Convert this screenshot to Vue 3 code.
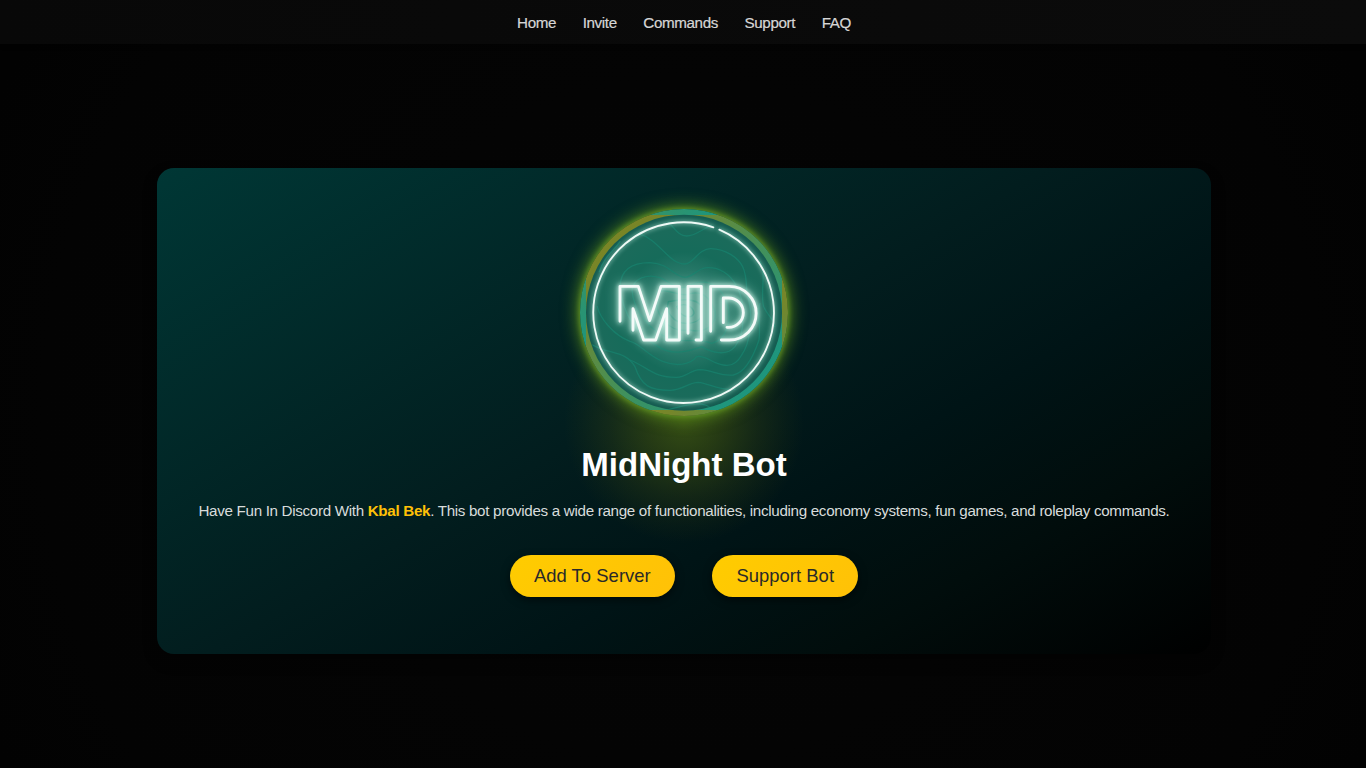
<script setup>
const links = ['Home', 'Invite', 'Commands', 'Support', 'FAQ']
const actions = ['Add To Server', 'Support Bot']
</script>

<template>
  <div class="page">
    <nav class="nav">
      <a v-for="link in links" :key="link" class="nav-link">{{ link }}</a>
    </nav>
    <main class="main">
      <section class="card">
        <div class="logo">
          <div class="halo"></div>
          <div class="ring"></div>
          <svg class="mark" viewBox="60 57 624 621" aria-label="MID">
            <defs>
              <radialGradient id="disc" cx="372" cy="368" r="294" gradientUnits="userSpaceOnUse">
                <stop offset="0" stop-color="#4a9282" />
                <stop offset=".3" stop-color="#318070" />
                <stop offset=".62" stop-color="#166b5a" />
                <stop offset=".9" stop-color="#1b6b5b" />
                <stop offset="1" stop-color="#155b50" />
              </radialGradient>
              <clipPath id="inside"><circle cx="372" cy="368" r="292" /></clipPath>
              <filter id="soft" x="-30%" y="-30%" width="160%" height="160%"><feGaussianBlur stdDeviation="6" /></filter>
              <filter id="wide" x="-30%" y="-50%" width="160%" height="200%"><feGaussianBlur stdDeviation="18" /></filter>
              <g id="letters">
                <path d="M180 394V289H235L269 392L303 289H358V450H320V356L287 450H251L219 356V421" />
                <path d="M384 430V289H424V450H408" />
                <path d="M452 424V289H508A80.5 80.5 0 0 1 508 450H484" />
                <path d="M490 398V324H506A44 44 0 0 1 506 412H501" />
              </g>
              <path id="orbit" d="M478 119A271 271 0 1 1 460 112" />
            </defs>
            <circle cx="372" cy="368" r="294" fill="url(#disc)" />
            <g clip-path="url(#inside)" class="contours">
              <path d="M325 97C345 115 355 138 380 138C407 138 420 120 455 106" />
              <path d="M235 130C300 150 325 222 375 222C400 222 415 176 452 176C500 177 535 205 548 230C565 265 555 300 566 330C580 385 570 460 545 495C530 523 510 529 490 525C455 520 435 493 410 500C390 525 350 530 310 515C260 495 240 460 210 454C160 435 120 385 112 350" />
              <path d="M180 290C182 240 215 218 270 218C330 220 340 260 375 262C400 262 410 233 445 233C485 233 510 255 528 285C560 340 555 430 525 470C500 500 455 488 425 470C390 482 340 500 295 470C240 440 190 385 180 290" />
              <path d="M216 300C220 265 260 250 300 263C340 282 350 300 380 290C435 262 475 280 495 325C525 390 495 452 455 460C410 440 370 465 315 440C250 405 220 350 216 300" />
              <path d="M290 310C315 290 340 315 380 314C430 295 455 330 465 365C470 410 430 430 390 420C330 430 280 380 290 310M325 335C350 330 410 320 425 350C435 385 410 400 380 400C340 400 315 365 325 335M350 350C375 335 400 350 402 370C395 387 365 385 350 350" />
              <path d="M98 465C150 495 195 480 225 530C245 590 270 600 330 601C370 600 385 577 415 577C450 580 470 602 525 598" />
              <path d="M210 510C270 535 280 563 350 562C380 562 390 540 420 539C460 540 480 560 520 555C555 548 580 500 597 450C603 400 590 370 600 340" />
              <path d="M600 215C620 250 600 310 611 350C625 380 640 385 644 410M320 660C370 650 420 625 460 658M118 245C135 195 160 185 180 155M100 330C108 290 120 270 130 250" />
            </g>
            <use href="#letters" class="bloom" filter="url(#wide)" />
            <use href="#letters" class="glow" filter="url(#soft)" />
            <use href="#letters" class="neon" />
            <use href="#orbit" class="orbit-glow" filter="url(#soft)" />
            <use href="#orbit" class="orbit" />
          </svg>
        </div>
        <h1 class="title">MidNight Bot</h1>
        <p class="text">Have Fun In Discord With <strong class="accent">Kbal Bek</strong>. This bot provides a wide range of functionalities, including economy systems, fun games, and roleplay commands.</p>
        <div class="actions">
          <button v-for="action in actions" :key="action" class="button">{{ action }}</button>
        </div>
      </section>
    </main>
  </div>
</template>

<style>
html, body { margin: 0; background: #000; overflow: hidden; }
</style>

<style scoped>
.page {
  height: 768px;
  display: flex;
  flex-direction: column;
  font-family: "Liberation Sans", Arial, sans-serif;
  background: radial-gradient(circle at 50% 55%, #050505 0, #040404 340px, #030303 640px, #020202 760px);
}
.nav {
  flex: none;
  height: 44px;
  box-sizing: border-box;
  padding: 0 0 0 2px;
  display: flex;
  justify-content: center;
  align-items: center;
  gap: 26.6px;
  background: linear-gradient(90deg, #080808, #0b0b0b);
  box-shadow: 0 2px 4px rgba(0, 0, 0, .3);
}
.nav-link { font-size: 15.2px; letter-spacing: -.38px; color: #d6d6d6; -webkit-text-stroke: .2px #d6d6d6; }
.main { flex: 1; display: flex; justify-content: center; align-items: flex-start; padding-top: 124px; }
.card {
  width: 1054px;
  height: 486px;
  margin-left: 2px;
  box-sizing: border-box;
  padding-top: 41px;
  border-radius: 17px;
  display: flex;
  flex-direction: column;
  align-items: center;
  background: linear-gradient(150deg, #003735 0%, #021d1e 47%, #001416 64%, #010d0c 80%, #000 100%);
  box-shadow: 0 7px 14px rgba(0, 0, 0, .4);
}
.logo { position: relative; width: 208px; height: 207px; flex: none; }
.halo {
  position: absolute;
  left: -16px;
  top: 94px;
  width: 240px;
  height: 240px;
  border-radius: 50%;
  background: radial-gradient(closest-side, rgba(92, 116, 14, .56) 0, rgba(82, 98, 12, .45) 30%, rgba(76, 84, 12, .24) 62%, rgba(70, 76, 10, .09) 85%, rgba(60, 70, 10, 0) 100%);
}
.ring {
  position: absolute;
  inset: 0;
  box-sizing: border-box;
  border: 6px solid transparent;
  border-radius: 50%;
  background: linear-gradient(135deg, #7e8420 0%, #76862a 22%, #459058 52%, #1f957c 82%, #1b987e 100%);
  box-shadow: 0 0 5px 1px #5f8f24, 0 0 16px 3px rgba(105, 160, 28, .75);
}
.mark { position: absolute; left: 0; top: 0; width: 208px; height: 207px; overflow: visible; }
.mark path, .mark use { fill: none; stroke-linejoin: round; stroke-linecap: round; }
.contours path { stroke: #18816d; stroke-width: 4; opacity: .8; }
.bloom { stroke: #b9e8da; stroke-width: 18; opacity: .6; }
.glow { stroke: #d8fff3; stroke-width: 14; opacity: .75; }
.neon { stroke: #f4fbf9; stroke-width: 8.5; }
.orbit-glow { stroke: #b9eadc; stroke-width: 9; opacity: .6; }
.orbit { stroke: #eefaf6; stroke-width: 5.5; }
.title {
  position: relative;
  margin: 30px 0 0;
  font-size: 33px;
  line-height: 38px;
  font-weight: 700;
  color: #fff;
}
.text {
  position: relative;
  margin: 17px 0 0;
  font-size: 15.2px;
  letter-spacing: -.32px;
  line-height: 19px;
  color: #d8dcdc;
  white-space: nowrap;
}
.accent { color: #ffc107; font-weight: 700; }
.actions { display: flex; gap: 37px; margin-top: 35px; }
.button {
  height: 41.5px;
  padding: 0 24.3px;
  border: 0;
  border-radius: 21px;
  font-family: inherit;
  font-size: 18.4px;
  letter-spacing: .05px;
  color: #292929;
  background: linear-gradient(135deg, #fc0, #ffc107);
  box-shadow: 0 3px 8px rgba(0, 0, 0, .55);
}
</style>
